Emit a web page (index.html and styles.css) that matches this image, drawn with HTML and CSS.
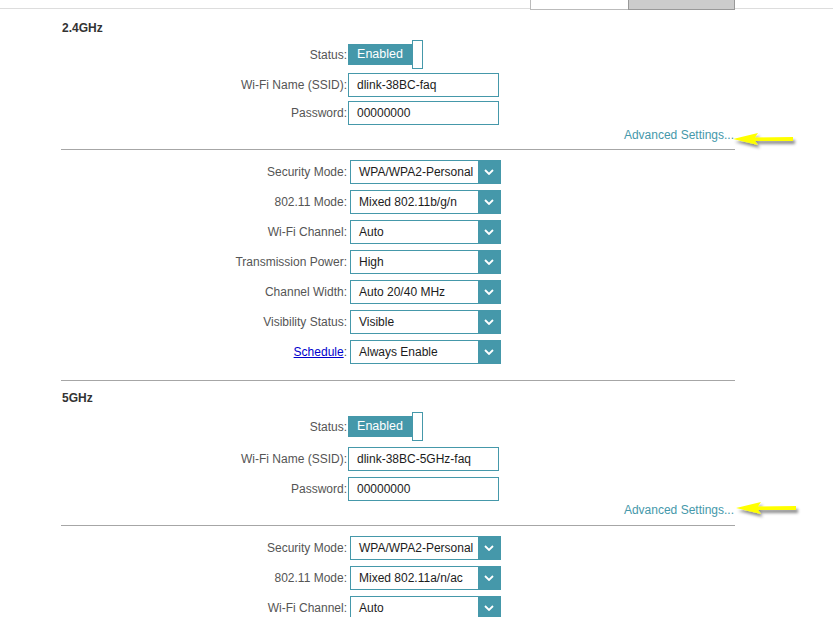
FILE: index.html
```html
<!DOCTYPE html>
<html lang="en">
<head>
<meta charset="utf-8">
<title>Wireless Settings</title>
<link rel="stylesheet" href="styles.css">
</head>
<body>
<div class="tabbar">
  <div class="tab"></div>
  <div class="tab tab--active"></div>
</div>
<main class="content">
  <section class="band">
    <h2 class="band-title">2.4GHz</h2>
    <div class="field field--status"><span class="label">Status:</span><div class="toggle"><span class="toggle-on">Enabled</span><span class="toggle-knob"></span></div></div>
    <div class="field"><span class="label">Wi-Fi Name (SSID):</span><div class="input">dlink-38BC-faq</div></div>
    <div class="field"><span class="label">Password:</span><div class="input">00000000</div></div>
    <div class="adv"><a class="adv-link">Advanced Settings...</a>
      <svg class="note-arrow" viewBox="0 0 66 22"><defs><filter id="sh1" x="-20%" y="-60%" width="150%" height="220%"><feDropShadow dx="2" dy="3" stdDeviation="1.5" flood-color="#000" flood-opacity="0.45"/></filter></defs><polygon points="3,11 28,5 25,9.5 63,9 63,13 25,13 28,17" fill="#ffff00" filter="url(#sh1)"/></svg>
    </div>
    <div class="divider"></div>
    <div class="opts">
      <div class="field"><span class="label">Security Mode:</span><div class="select"><span class="select-value">WPA/WPA2-Personal</span><span class="select-btn"><svg width="10" height="6" viewBox="0 0 10 6"><path d="M1 1 L5 5 L9 1" fill="none" stroke="#fff" stroke-width="1.8"/></svg></span></div></div>
      <div class="field"><span class="label">802.11 Mode:</span><div class="select"><span class="select-value">Mixed 802.11b/g/n</span><span class="select-btn"><svg width="10" height="6" viewBox="0 0 10 6"><path d="M1 1 L5 5 L9 1" fill="none" stroke="#fff" stroke-width="1.8"/></svg></span></div></div>
      <div class="field"><span class="label">Wi-Fi Channel:</span><div class="select"><span class="select-value">Auto</span><span class="select-btn"><svg width="10" height="6" viewBox="0 0 10 6"><path d="M1 1 L5 5 L9 1" fill="none" stroke="#fff" stroke-width="1.8"/></svg></span></div></div>
      <div class="field"><span class="label">Transmission Power:</span><div class="select"><span class="select-value">High</span><span class="select-btn"><svg width="10" height="6" viewBox="0 0 10 6"><path d="M1 1 L5 5 L9 1" fill="none" stroke="#fff" stroke-width="1.8"/></svg></span></div></div>
      <div class="field"><span class="label">Channel Width:</span><div class="select"><span class="select-value">Auto 20/40 MHz</span><span class="select-btn"><svg width="10" height="6" viewBox="0 0 10 6"><path d="M1 1 L5 5 L9 1" fill="none" stroke="#fff" stroke-width="1.8"/></svg></span></div></div>
      <div class="field"><span class="label">Visibility Status:</span><div class="select"><span class="select-value">Visible</span><span class="select-btn"><svg width="10" height="6" viewBox="0 0 10 6"><path d="M1 1 L5 5 L9 1" fill="none" stroke="#fff" stroke-width="1.8"/></svg></span></div></div>
      <div class="field"><span class="label"><a class="label-link">Schedule</a>:</span><div class="select"><span class="select-value">Always Enable</span><span class="select-btn"><svg width="10" height="6" viewBox="0 0 10 6"><path d="M1 1 L5 5 L9 1" fill="none" stroke="#fff" stroke-width="1.8"/></svg></span></div></div>
    </div>
  </section>
  <div class="divider divider--section"></div>
  <section class="band band--wide">
    <h2 class="band-title">5GHz</h2>
    <div class="field field--status"><span class="label">Status:</span><div class="toggle"><span class="toggle-on">Enabled</span><span class="toggle-knob"></span></div></div>
    <div class="field"><span class="label">Wi-Fi Name (SSID):</span><div class="input">dlink-38BC-5GHz-faq</div></div>
    <div class="field"><span class="label">Password:</span><div class="input">00000000</div></div>
    <div class="adv"><a class="adv-link">Advanced Settings...</a>
      <svg class="note-arrow note-arrow--low" viewBox="0 0 66 22"><defs><filter id="sh2" x="-20%" y="-60%" width="150%" height="220%"><feDropShadow dx="2" dy="3" stdDeviation="1.5" flood-color="#000" flood-opacity="0.45"/></filter></defs><polygon points="3,11 28,5 25,9.5 63,9 63,13 25,13 28,17" fill="#ffff00" filter="url(#sh2)"/></svg>
    </div>
    <div class="divider"></div>
    <div class="opts">
      <div class="field"><span class="label">Security Mode:</span><div class="select"><span class="select-value">WPA/WPA2-Personal</span><span class="select-btn"><svg width="10" height="6" viewBox="0 0 10 6"><path d="M1 1 L5 5 L9 1" fill="none" stroke="#fff" stroke-width="1.8"/></svg></span></div></div>
      <div class="field"><span class="label">802.11 Mode:</span><div class="select"><span class="select-value">Mixed 802.11a/n/ac</span><span class="select-btn"><svg width="10" height="6" viewBox="0 0 10 6"><path d="M1 1 L5 5 L9 1" fill="none" stroke="#fff" stroke-width="1.8"/></svg></span></div></div>
      <div class="field"><span class="label">Wi-Fi Channel:</span><div class="select"><span class="select-value">Auto</span><span class="select-btn"><svg width="10" height="6" viewBox="0 0 10 6"><path d="M1 1 L5 5 L9 1" fill="none" stroke="#fff" stroke-width="1.8"/></svg></span></div></div>
    </div>
  </section>
</main>
</body>
</html>
```

FILE: styles.css
```css
html, body {
  margin: 0;
  padding: 0;
  overflow: hidden;
  background: #fff;
}

body {
  width: 833px;
  height: 617px;
  font-family: "Liberation Sans", Arial, sans-serif;
  font-size: 12px;
  color: #555;
}

.tabbar {
  display: flex;
  justify-content: flex-end;
  height: 8px;
  padding-right: 98px;
  border-bottom: 1px solid #ddd;
}

.tab {
  flex: none;
  box-sizing: border-box;
  width: 99px;
  height: 10px;
  background: #fff;
  border: 1px solid #bbb;
  border-top: 0;
}

.tab--active {
  width: 107px;
  margin-left: -1px;
  background: #ccc;
  border-color: #999;
}

.content {
  margin-left: 61px;
  width: 674px;
}

.band-title {
  margin: 12px 0 0 1px;
  font-size: 12px;
  line-height: 14px;
  font-weight: bold;
  color: #333;
}

.field {
  display: flex;
  align-items: center;
  height: 24px;
  margin-top: 4px;
}

.field--status {
  height: 29px;
  margin-top: 5px;
}

.label {
  flex: none;
  width: 286px;
  text-align: right;
  white-space: nowrap;
  color: #555;
}

.label-link {
  color: #0000cc;
  text-decoration: underline;
}

.toggle {
  display: flex;
  align-items: center;
  margin-left: 1px;
}

.toggle-on {
  width: 64px;
  height: 21px;
  background: #4598aa;
  color: #fff;
  font-size: 12.5px;
  line-height: 21px;
  text-align: center;
}

.toggle-knob {
  box-sizing: border-box;
  width: 11px;
  height: 29px;
  background: #fff;
  border: 1px solid #4598aa;
}

.input {
  box-sizing: border-box;
  width: 151px;
  height: 24px;
  margin-left: 1px;
  padding-left: 8px;
  border: 1px solid #4598aa;
  line-height: 22px;
  color: #1c1c1c;
}

.adv {
  position: relative;
  margin-top: 3px;
  padding-right: 1px;
  line-height: 14px;
  text-align: right;
}

.adv-link {
  color: #4598aa;
  text-decoration: none;
}

.note-arrow {
  position: absolute;
  left: 669px;
  top: 0;
  width: 66px;
  height: 22px;
  overflow: visible;
}

.note-arrow--low {
  left: 672px;
  top: -6px;
}

.divider {
  margin-top: 7px;
  border-top: 1px solid #a6a6a6;
}

.divider--section {
  margin-top: 16px;
}

.opts {
  display: flex;
  flex-direction: column;
  gap: 6px;
  padding-top: 10px;
}

.select {
  display: flex;
  box-sizing: border-box;
  width: 151px;
  height: 24px;
  margin-left: 3px;
  background: #fff;
  border: 1px solid #4598aa;
}

.select-value {
  flex: 1;
  padding-left: 8px;
  line-height: 22px;
  color: #1c1c1c;
  white-space: nowrap;
  overflow: hidden;
}

.select-btn {
  flex: none;
  width: 22px;
  display: flex;
  align-items: center;
  justify-content: center;
  background: #4598aa;
}

.band--wide .band-title {
  margin-top: 10px;
}

.band--wide .field {
  margin-top: 6px;
}

.band--wide .field--status {
  margin-top: 7px;
}

.band--wide .adv {
  margin-top: 2px;
}

.band--wide .divider {
  margin-top: 8px;
}

.opts > .field,
.band--wide .opts > .field {
  margin-top: 0;
}
```
